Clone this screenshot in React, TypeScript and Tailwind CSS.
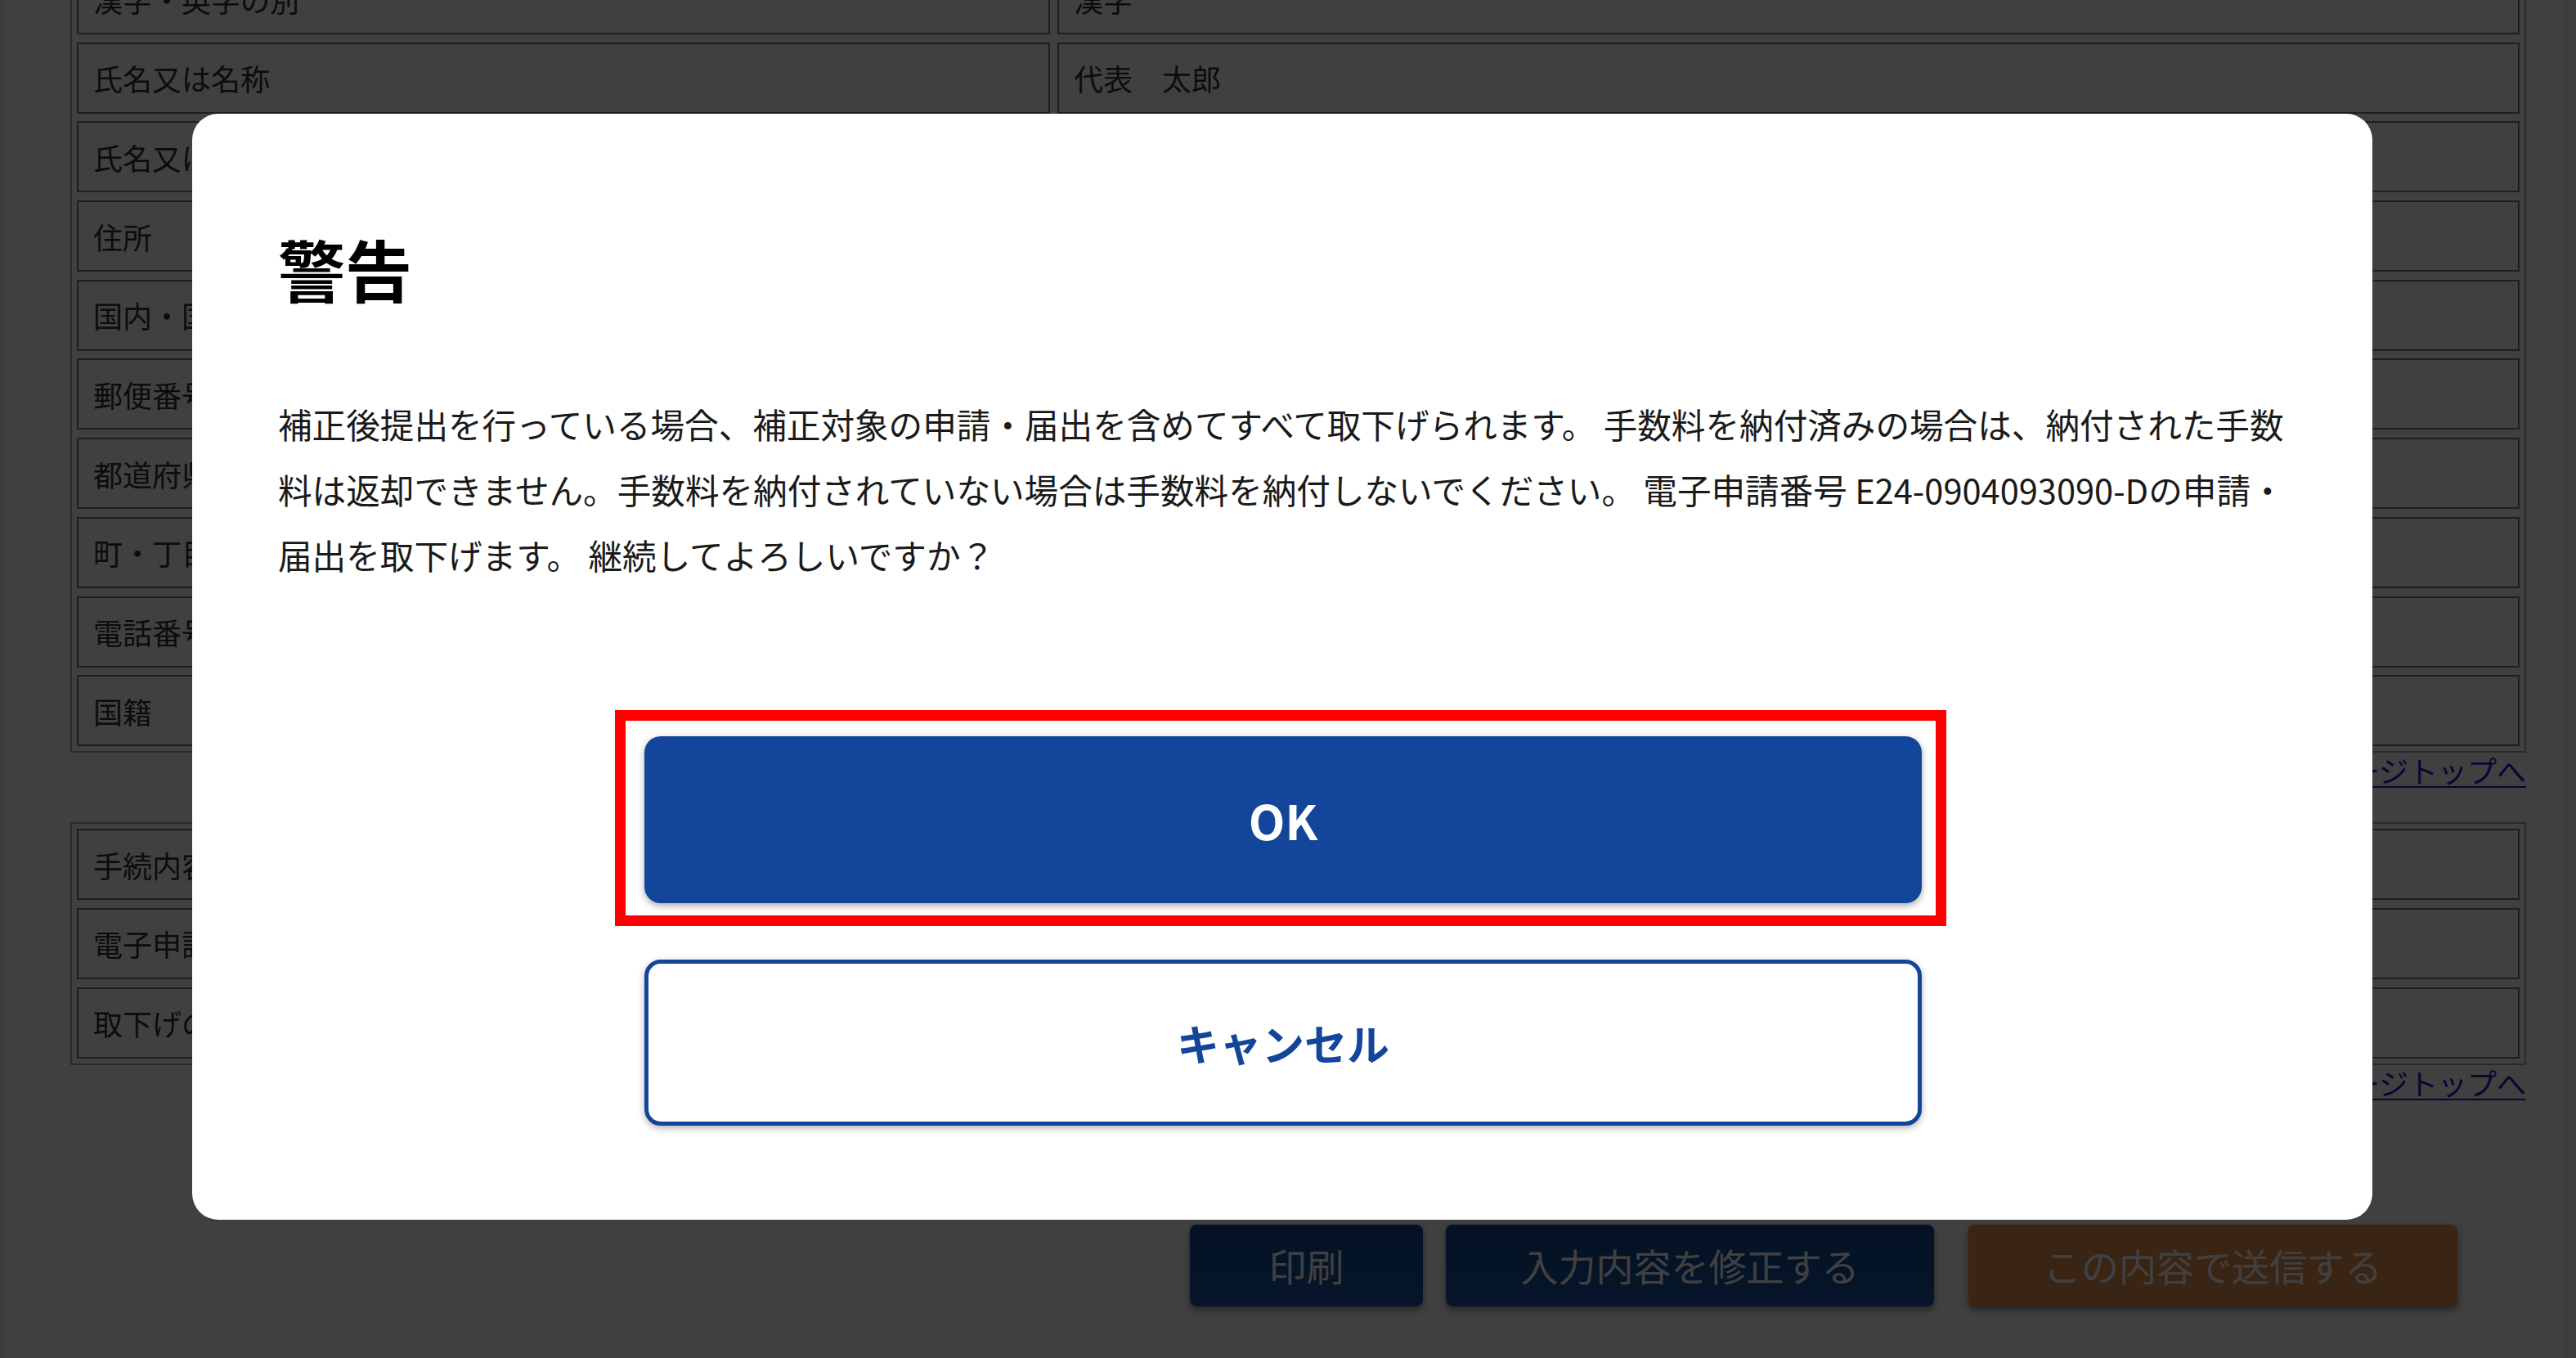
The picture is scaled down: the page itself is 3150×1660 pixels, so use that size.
import React from "react";

const applicantRows: [string, string][] = [
  ["漢字・英字の別", "漢字"],
  ["氏名又は名称", "代表　太郎"],
  ["氏名又は名称（フリガナ）", "ダイヒョウ　タロウ"],
  ["住所", ""],
  ["国内・国外の別", "国内"],
  ["郵便番号", "1000001"],
  ["都道府県", "東京都"],
  ["町・丁目・番地", "千代田区千代田1-1"],
  ["電話番号", "0300000000"],
  ["国籍", "日本"],
];

const procedureRows: [string, string][] = [
  ["手続内容", "取下げ"],
  ["電子申請番号", "E24-0904093090-D"],
  ["取下げの理由", "申請内容の誤り"],
];

function InfoTable({ rows }: { rows: [string, string][] }) {
  return (
    <section className="flex flex-col gap-[9.7px] border-2 border-[#a9a9a9] p-[6px]">
      {rows.map(([label, value]) => (
        <div key={label} className="grid grid-cols-[1190px_1fr] gap-[9px]">
          <div className="flex h-[87px] items-center border-2 border-[#787878] px-[18px] text-[36px]">
            {label}
          </div>
          <div className="flex h-[87px] items-center border-2 border-[#787878] px-[18px] text-[36px]">
            {value}
          </div>
        </div>
      ))}
    </section>
  );
}

function PageTopLink() {
  return (
    <div className="flex justify-end pt-[1px]">
      <a href="#top" className="text-[36px] leading-[40px] text-[#1c1cc8] underline decoration-2 underline-offset-[4px]">
        ページトップへ
      </a>
    </div>
  );
}

export default function App() {
  return (
    <div className="relative h-[1660px] w-[3150px] overflow-hidden bg-white font-['Noto_Sans_CJK_JP','Noto_Sans',sans-serif] text-[#333]">
      {/* page behind the dialog */}
      <div className="flex h-full">
        <div className="w-[4px] bg-[#ececec]" />
        <main className="ml-[82px] mr-[44px] -mt-[53px] flex-1">
          <InfoTable rows={applicantRows} />
          <div className="pb-[44px]">
            <PageTopLink />
          </div>
          <InfoTable rows={procedureRows} />
          <div className="pb-[154px]">
            <PageTopLink />
          </div>
          <div className="mr-[84px] flex justify-end">
            <div className="flex gap-[28px]">
              <button className="h-[100px] w-[285px] rounded-[8px] bg-gradient-to-b from-[#134690] to-[#1a56a6] text-[46px] text-white shadow-[0_4px_8px_rgba(0,0,0,0.45)]">
                印刷
              </button>
              <button className="h-[100px] w-[597px] rounded-[8px] bg-gradient-to-b from-[#134690] to-[#1a56a6] text-[46px] text-white shadow-[0_4px_8px_rgba(0,0,0,0.45)]">
                入力内容を修正する
              </button>
            </div>
            <button className="ml-[42px] h-[100px] w-[598px] rounded-[8px] bg-[#e8904c] text-[46px] text-white shadow-[0_4px_8px_rgba(0,0,0,0.45)]">
              この内容で送信する
            </button>
          </div>
        </main>
        <div className="w-[17px] bg-[#f1f1f1]" />
      </div>

      {/* overlay + dialog */}
      <div className="absolute inset-0 bg-black/75" />
      <div className="absolute inset-0 flex justify-center pt-[139px] pr-[14px]">
        <div className="h-fit w-[2666px] rounded-[32px] bg-white pb-[115px] pl-[105px] pr-[90px] pt-[126px]">
          <h2 className="text-[82px] font-bold leading-[126px] text-black">警告</h2>
          <p className="mt-[87px] text-[41.6px] leading-[80px] text-[#1a1a1a]">
            補正後提出を行っている場合、補正対象の申請・届出を含めてすべて取下げられます。 手数料を納付済みの場合は、納付された手数料は返却できません。手数料を納付されていない場合は手数料を納付しないでください。 電子申請番号 E24-0904093090-Dの申請・届出を取下げます。 継続してよろしいですか？
          </p>
          <div className="mt-[182px] flex flex-col items-center gap-[69px] pr-[13px]">
            <div className="relative">
              <span className="pointer-events-none absolute -bottom-[28px] -left-[36px] -right-[30px] -top-[32px] border-[13px] border-[#ff0000]" />
              <button className="h-[204px] w-[1562px] rounded-[20px] bg-[#13469a] text-[58px] font-bold text-white shadow-[0_3px_8px_rgba(0,0,0,0.35)]">
                OK
              </button>
            </div>
            <button className="h-[203px] w-[1562px] rounded-[20px] border-[5px] border-[#13469a] bg-white text-[52px] font-bold text-[#13469a] shadow-[0_3px_8px_rgba(0,0,0,0.3)]">
              キャンセル
            </button>
          </div>
        </div>
      </div>
    </div>
  );
}
